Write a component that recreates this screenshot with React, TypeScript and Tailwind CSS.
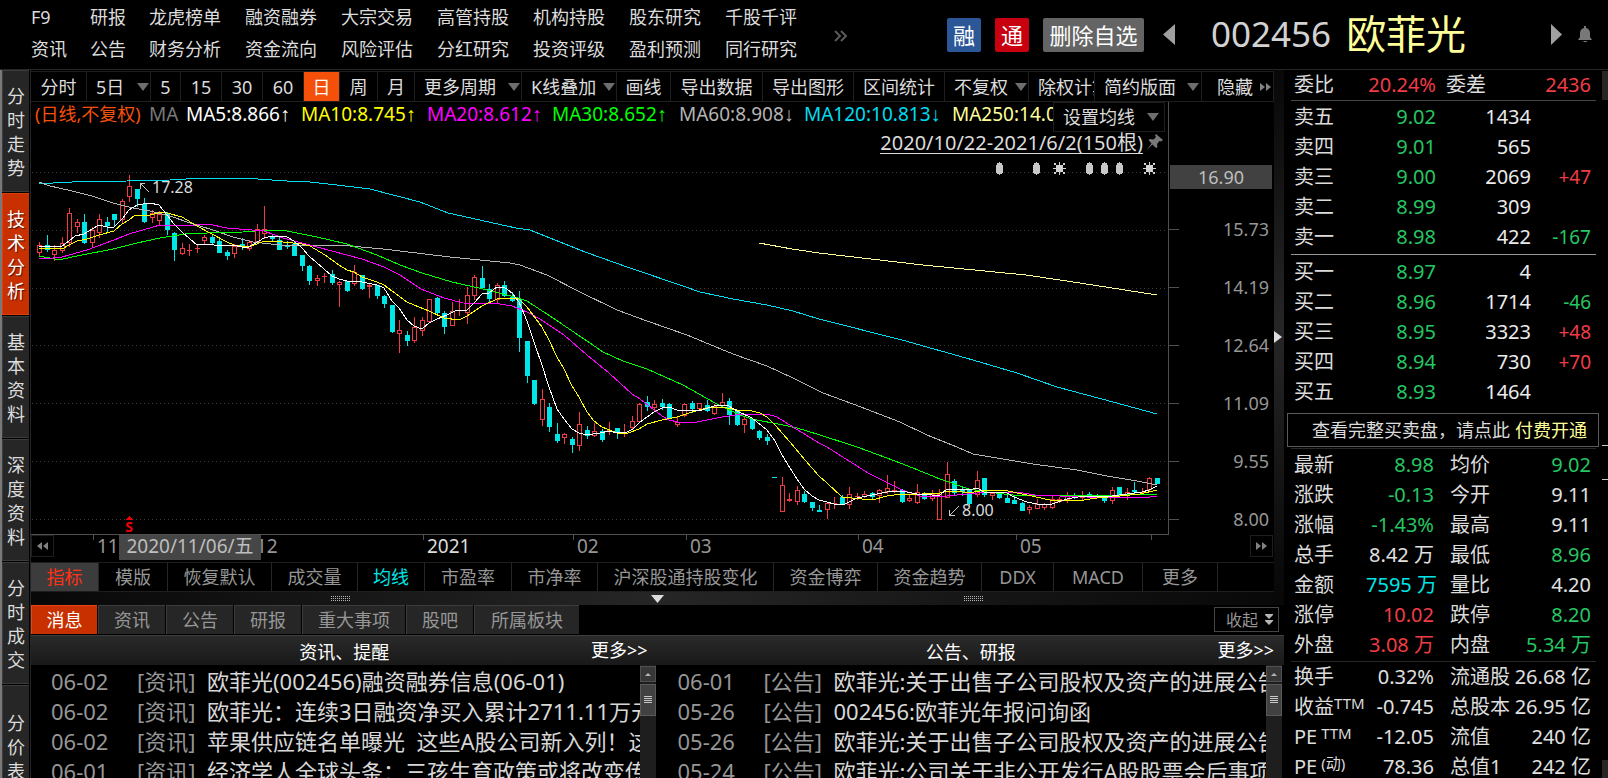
import React from "react";

const topLinks: [string, string][] = [
  ["F9", "资讯"],
  ["研报", "公告"],
  ["龙虎榜单", "财务分析"],
  ["融资融券", "资金流向"],
  ["大宗交易", "风险评估"],
  ["高管持股", "分红研究"],
  ["机构持股", "投资评级"],
  ["股东研究", "盈利预测"],
  ["千股千评", "同行研究"],
];

const sideTabs = ["分时走势", "技术分析", "基本资料", "深度资料", "分时成交", "分价表"];

const toolbar: { label: string; width: string; arrow?: boolean; active?: boolean }[] = [
  { label: "分时", width: "w-[56px]" },
  { label: "5日", width: "w-[64px]", arrow: true },
  { label: "5", width: "w-[30px]" },
  { label: "15", width: "w-[41px]" },
  { label: "30", width: "w-[41px]" },
  { label: "60", width: "w-[41px]" },
  { label: "日", width: "w-[36px]", active: true },
  { label: "周", width: "w-[38px]" },
  { label: "月", width: "w-[37px]" },
  { label: "更多周期", width: "w-[107px]", arrow: true },
  { label: "K线叠加", width: "w-[95px]", arrow: true },
  { label: "画线", width: "w-[54px]" },
  { label: "导出数据", width: "w-[92px]" },
  { label: "导出图形", width: "w-[91px]" },
  { label: "区间统计", width: "w-[91px]" },
  { label: "不复权", width: "w-[84px]", arrow: true },
];

const averages = [
  { label: "MA5:8.866", arrow: "↑", color: "text-white", width: "w-[115px]" },
  { label: "MA10:8.745", arrow: "↑", color: "text-[#ffff00]", width: "w-[126px]" },
  { label: "MA20:8.612", arrow: "↑", color: "text-[#ff00ff]", width: "w-[125px]" },
  { label: "MA30:8.652", arrow: "↑", color: "text-[#00ff00]", width: "w-[127px]" },
  { label: "MA60:8.908", arrow: "↓", color: "text-[#b4b4b4]", width: "w-[125px]" },
  { label: "MA120:10.813", arrow: "↓", color: "text-[#00dcf0]", width: "w-[148px]" },
  { label: "MA250:14.037", arrow: "↓", color: "text-[#ffff99]", width: "w-[148px]" },
];

/* direction, high, body top, body bottom, low */
type Candle = ["u" | "d", number, number, number, number];
const candles: Candle[] = [
  ["u", 242, 245, 253, 257], ["d", 235, 245, 250, 252], ["u", 245, 250, 255, 261], ["u", 237, 243, 251, 253],
  ["u", 208, 213, 243, 247], ["u", 219, 222, 227, 233], ["d", 214, 222, 243, 244], ["u", 227, 230, 243, 247],
  ["u", 214, 219, 233, 238], ["d", 217, 222, 226, 232], ["d", 214, 214, 220, 227], ["u", 199, 201, 220, 224],
  ["u", 175, 186, 197, 202], ["d", 189, 189, 199, 207], ["d", 198, 204, 222, 223], ["u", 210, 213, 218, 223],
  ["u", 211, 214, 221, 225], ["d", 212, 213, 230, 235], ["d", 232, 233, 250, 261], ["u", 243, 248, 254, 255],
  ["u", 244, 250, 251, 256], ["u", 245, 248, 249, 253], ["u", 235, 237, 241, 245], ["d", 235, 237, 243, 244],
  ["d", 238, 241, 253, 253], ["d", 250, 252, 256, 260], ["u", 244, 246, 254, 258], ["d", 238, 244, 246, 250],
  ["u", 240, 242, 249, 251], ["u", 224, 229, 242, 244], ["u", 206, 229, 234, 239], ["d", 234, 237, 239, 241],
  ["d", 237, 240, 250, 250], ["d", 241, 245, 247, 249], ["d", 242, 244, 256, 256], ["d", 255, 255, 266, 271],
  ["d", 265, 266, 281, 285], ["u", 275, 278, 281, 286], ["u", 273, 276, 277, 283], ["d", 270, 274, 283, 285],
  ["u", 281, 282, 285, 307], ["d", 281, 281, 291, 292], ["u", 265, 272, 284, 286], ["d", 275, 275, 289, 290],
  ["u", 284, 285, 287, 298], ["d", 285, 285, 296, 299], ["d", 295, 296, 304, 308], ["d", 305, 305, 332, 333],
  ["u", 320, 330, 334, 353], ["d", 331, 335, 341, 346], ["u", 317, 327, 341, 343], ["u", 317, 320, 331, 336],
  ["u", 299, 299, 322, 323], ["d", 297, 298, 313, 316], ["d", 311, 313, 327, 334], ["u", 302, 311, 326, 326],
  ["u", 299, 310, 311, 316], ["u", 287, 295, 313, 324], ["u", 275, 277, 296, 300], ["d", 266, 278, 288, 289],
  ["d", 284, 289, 299, 302], ["u", 283, 285, 300, 303], ["d", 281, 285, 296, 297], ["d", 292, 297, 301, 302],
  ["d", 291, 299, 338, 352], ["d", 341, 341, 376, 383], ["d", 380, 380, 404, 405], ["u", 389, 399, 420, 426],
  ["d", 403, 407, 427, 432], ["d", 423, 434, 441, 443], ["u", 433, 434, 438, 444], ["d", 437, 439, 445, 453],
  ["u", 412, 424, 446, 451], ["d", 426, 430, 436, 439], ["u", 423, 431, 436, 437], ["d", 429, 431, 440, 442],
  ["u", 422, 430, 431, 435], ["d", 428, 428, 433, 439], ["u", 424, 432, 433, 437], ["u", 416, 421, 428, 429],
  ["u", 403, 404, 422, 423], ["d", 396, 402, 407, 411], ["u", 400, 404, 408, 411], ["d", 399, 403, 407, 410],
  ["d", 403, 404, 418, 419], ["u", 416, 422, 425, 427], ["u", 403, 404, 416, 417], ["d", 401, 403, 409, 413],
  ["u", 403, 403, 409, 410], ["d", 400, 405, 411, 412], ["u", 404, 406, 414, 415], ["u", 393, 402, 406, 407],
  ["d", 398, 401, 415, 425], ["d", 411, 411, 425, 426], ["u", 417, 419, 425, 433], ["d", 418, 419, 429, 430],
  ["d", 430, 431, 438, 440], ["d", 434, 437, 441, 445], ["d", 477, 477, 478, 478], ["u", 477, 485, 512, 512],
  ["u", 493, 499, 501, 502], ["u", 486, 490, 502, 505], ["d", 491, 494, 502, 503], ["d", 502, 502, 508, 511],
  ["d", 505, 510, 512, 512], ["u", 503, 503, 510, 519], ["u", 497, 503, 504, 509], ["d", 495, 497, 504, 505],
  ["u", 487, 494, 505, 509], ["u", 493, 496, 497, 500], ["u", 491, 494, 497, 498], ["d", 492, 493, 497, 499],
  ["u", 489, 490, 496, 503], ["u", 475, 488, 492, 494], ["u", 481, 490, 491, 493], ["d", 489, 490, 502, 503],
  ["u", 494, 498, 501, 502], ["u", 484, 492, 503, 504], ["d", 492, 493, 499, 500], ["u", 490, 494, 499, 501],
  ["u", 489, 494, 520, 520], ["u", 462, 474, 498, 498], ["d", 479, 481, 493, 495], ["d", 487, 489, 492, 496],
  ["d", 489, 490, 504, 505], ["u", 471, 480, 495, 497], ["d", 478, 478, 495, 497], ["u", 492, 493, 496, 500],
  ["d", 493, 494, 498, 499], ["d", 495, 498, 503, 503], ["d", 496, 500, 504, 504], ["d", 502, 503, 511, 511],
  ["u", 505, 507, 510, 514], ["u", 499, 504, 509, 509], ["u", 503, 504, 508, 510], ["u", 496, 499, 508, 509],
  ["u", 497, 499, 502, 503], ["u", 492, 496, 500, 503], ["d", 493, 495, 497, 499], ["u", 491, 495, 498, 500],
  ["d", 492, 494, 496, 497], ["d", 494, 495, 497, 498], ["d", 495, 496, 501, 503], ["u", 487, 490, 501, 504],
  ["d", 487, 487, 496, 496], ["u", 488, 492, 496, 500], ["d", 482, 490, 492, 494], ["u", 488, 492, 493, 495],
  ["u", 477, 478, 490, 492], ["d", 478, 478, 484, 484],
];

const lines = [
  { color: "#00dcf0", points: "39,183 53,183 72,182 127,181 170,180 203,178 243,178 287,181 310,182 337,185 370,189 393,195 420,202 448,213 516,228 530,230 555,240 585,252 630,268 683,286 700,292 733,299 767,305 793,311 819,319 902,340 973,360 1017,373 1057,387 1113,402 1157,414" },
  { color: "#ffff99", points: "759,243 792,249 819,253 871,259 923,265 1026,275 1080,283 1157,295" },
  { color: "#b4b4b4", points: "39,182 50,186 72,191 92,196 113,203 133,208 150,211 170,216 190,223 213,230 233,237 253,242 280,245 350,246 383,249 400,251 450,257 510,263 520,265 547,275 580,292 617,310 647,321 687,335 733,354 767,366 793,378 823,393 853,404 900,422 927,435 957,447 973,454 997,458 1033,464 1077,470 1107,476 1137,481 1157,485" },
  { color: "#00ff00", points: "39,256 55,259 63,259 77,256 113,249 137,243 160,238 185,234 207,233 243,232 268,230 287,231 317,237 347,244 377,255 400,265 422,273 452,282 483,289 515,297 527,301 550,316 587,341 603,352 623,361 647,369 683,385 715,403 740,415 752,419 783,425 797,428 820,435 857,447 887,458 913,468 940,479 969,489 987,492 1013,495 1037,495 1127,495 1157,494" },
  { color: "#ff00ff", points: "39,258 53,258 62,257 87,250 114,240 129,234 160,225 197,225 208,224 227,228 264,231 283,238 302,243 332,251 362,259 384,267 400,275 421,289 444,298 463,303 500,304 512,306 527,312 540,319 564,335 587,355 609,373 632,394 640,399 662,416 669,420 678,422 697,422 722,417 743,414 767,414 777,417 793,427 819,443 827,447 868,473 902,490 920,496 947,496 967,494 987,492 1017,492 1035,495 1060,496 1087,497 1150,497 1157,496" },
  { color: "#ffff00", points: "39,248 62,249 69,245 77,241 87,239 99,235 114,231 122,224 129,220 135,215 150,215 162,212 167,213 182,217 197,226 210,233 227,242 234,245 247,247 257,244 264,241 283,242 302,244 310,246 325,255 339,265 347,270 354,272 362,277 377,282 384,285 392,291 407,302 414,305 429,311 444,318 459,320 467,316 482,306 497,299 515,298 519,299 527,307 542,327 549,340 557,357 564,369 572,386 579,397 587,412 594,421 602,427 617,433 628,433 639,429 647,424 662,420 677,417 692,412 707,408 722,407 737,410 752,411 760,413 767,417 775,425 790,442 805,460 819,476 827,483 842,497 872,500 887,496 902,494 922,494 940,493 947,491 957,491 969,493 985,490 1003,490 1027,495 1050,500 1077,501 1097,498 1120,496 1140,494 1157,490" },
  { color: "#ffffff", points: "39,247 62,246 69,241 75,236 84,234 92,229 99,225 107,227 114,227 122,219 129,210 137,205 150,203 159,205 167,215 174,224 182,232 190,239 197,245 208,244 220,246 233,245 242,247 249,247 264,238 272,236 287,237 294,241 302,248 309,256 324,269 332,276 339,279 347,281 362,282 377,285 384,288 392,301 399,308 407,320 414,326 422,329 429,323 437,319 447,315 455,311 467,310 474,303 482,294 489,293 497,287 504,287 512,293 519,302 527,321 534,342 542,365 549,387 557,409 564,419 572,429 579,433 587,435 600,433 609,431 617,433 627,432 633,429 639,423 647,417 654,412 662,408 669,407 677,410 702,410 714,406 722,405 729,406 737,411 752,418 767,430 775,441 782,455 790,468 797,479 804,489 812,496 819,500 827,502 834,504 845,504 857,498 872,495 887,492 902,491 917,494 932,495 940,495 947,489 960,489 969,490 977,488 984,492 1007,493 1014,497 1027,502 1037,504 1052,504 1067,499 1083,496 1104,497 1127,494 1142,492 1149,490 1157,486" },
];

const priceMarks = ["15.73", "14.19", "12.64", "11.09", "9.55", "8.00"];
const gridRows = [172, 230, 288, 345, 403, 461, 519];

const timeMarks = ["11", "12", "2021", "02", "03", "04", "05", ""];

const indicatorTabs: { label: string; width: string; tone?: string }[] = [
  { label: "指标", width: "w-[68px]", tone: "bg-[#3c3c3c] text-[#ff3214]" },
  { label: "模版", width: "w-[69px]" },
  { label: "恢复默认", width: "w-[104px]" },
  { label: "成交量", width: "w-[86px]" },
  { label: "均线", width: "w-[67px]", tone: "text-[#00e6e6]" },
  { label: "市盈率", width: "w-[87px]" },
  { label: "市净率", width: "w-[86px]" },
  { label: "沪深股通持股变化", width: "w-[176px]" },
  { label: "资金博弈", width: "w-[104px]" },
  { label: "资金趋势", width: "w-[104px]" },
  { label: "DDX", width: "w-[72px]" },
  { label: "MACD", width: "w-[89px]" },
  { label: "更多", width: "w-[75px]" },
];

const newsTabs = [
  { label: "消息", width: "w-[66px]" },
  { label: "资讯", width: "w-[67px]" },
  { label: "公告", width: "w-[67px]" },
  { label: "研报", width: "w-[67px]" },
  { label: "重大事项", width: "w-[103px]" },
  { label: "股吧", width: "w-[67px]" },
  { label: "所属板块", width: "w-[105px]" },
];

const leftNews = [
  ["06-02", "[资讯]", "欧菲光(002456)融资融券信息(06-01)"],
  ["06-02", "[资讯]", "欧菲光：连续3日融资净买入累计2711.11万元"],
  ["06-02", "[资讯]", "苹果供应链名单曝光  这些A股公司新入列！这些"],
  ["06-01", "[资讯]", "经济学人全球头条：三孩生育政策或将改变传统"],
];
const rightNews = [
  ["06-01", "[公告]", "欧菲光:关于出售子公司股权及资产的进展公告"],
  ["05-26", "[公告]", "002456:欧菲光年报问询函"],
  ["05-26", "[公告]", "欧菲光:关于出售子公司股权及资产的进展公告"],
  ["05-24", "[公告]", "欧菲光:公司关于非公开发行A股股票会后事项"],
];

const sells = [
  ["卖五", "9.02", "1434", ""],
  ["卖四", "9.01", "565", ""],
  ["卖三", "9.00", "2069", "+47"],
  ["卖二", "8.99", "309", ""],
  ["卖一", "8.98", "422", "-167"],
];
const buys = [
  ["买一", "8.97", "4", ""],
  ["买二", "8.96", "1714", "-46"],
  ["买三", "8.95", "3323", "+48"],
  ["买四", "8.94", "730", "+70"],
  ["买五", "8.93", "1464", ""],
];

const G = "text-[#26c663]";
const R = "text-[#f03c46]";
const W = "text-[#e0e0e0]";

type Stat = { a: string; sup?: string; av: string; ac: string; b: string; bv: string; bc: string };
const stats: Stat[] = [
  { a: "最新", av: "8.98", ac: G, b: "均价", bv: "9.02", bc: G },
  { a: "涨跌", av: "-0.13", ac: G, b: "今开", bv: "9.11", bc: W },
  { a: "涨幅", av: "-1.43%", ac: G, b: "最高", bv: "9.11", bc: W },
  { a: "总手", av: "8.42 万", ac: W, b: "最低", bv: "8.96", bc: G },
  { a: "金额", av: "7595 万", ac: "text-[#00e6e6]", b: "量比", bv: "4.20", bc: W },
  { a: "涨停", av: "10.02", ac: R, b: "跌停", bv: "8.20", bc: G },
  { a: "外盘", av: "3.08 万", ac: R, b: "内盘", bv: "5.34 万", bc: G },
];
const ratios: Stat[] = [
  { a: "换手", av: "0.32%", ac: W, b: "流通股", bv: "26.68 亿", bc: W },
  { a: "收益", sup: "TTM", av: "-0.745", ac: W, b: "总股本", bv: "26.95 亿", bc: W },
  { a: "PE", sup: " TTM", av: "-12.05", ac: W, b: "流值", bv: "240 亿", bc: W },
  { a: "PE", sup: " (动)", av: "78.36", ac: W, b: "总值1", bv: "242 亿", bc: W },
];

function Down() {
  return (
    <svg className="h-[8px] w-[12px] shrink-0" viewBox="0 0 12 8" aria-hidden="true">
      <path d="M0 0H12L6 8Z" fill="#6e6e6e" />
    </svg>
  );
}

function Skip({ back = false }: { back?: boolean }) {
  return (
    <svg className="h-[8px] w-[11px] shrink-0" viewBox="0 0 11 8" aria-hidden="true">
      <path d={back ? "M5 0V8L0 4ZM11 0V8L6 4Z" : "M0 0V8L5 4ZM6 0V8L11 4Z"} fill="#828282" />
    </svg>
  );
}

function Header() {
  return (
    <header className="flex h-[70px] shrink-0 items-start border-b border-[#262626] pr-[16px] pl-[31px]">
      <nav className="grid grid-cols-[59px_59px_96px_96px_96px_96px_96px_96px_96px] pt-px text-[18px] leading-[32px] text-[#dcdcdc]">
        {topLinks.map(([top, bottom]) => (
          <div key={top} className="flex flex-col whitespace-nowrap">
            <a href="#">{top}</a>
            <a href="#">{bottom}</a>
          </div>
        ))}
      </nav>
      <button aria-label="展开" className="mt-[30px] ml-[13px]">
        <svg className="h-[12px] w-[14px]" viewBox="0 0 14 12" fill="none" stroke="#5a5a5a" strokeWidth="2" aria-hidden="true">
          <path d="M1 1L6 6L1 11M7 1L12 6L7 11" />
        </svg>
      </button>
      <div className="mt-[18px] ml-auto flex shrink-0 gap-[14px] text-[22px] leading-[34px] text-white">
        <button className="h-[34px] w-[34px] rounded-xs bg-[#2b5797]">融</button>
        <button className="h-[34px] w-[34px] rounded-xs bg-[#c80010]">通</button>
        <button className="h-[34px] w-[101px] rounded-xs bg-[#646464]">删除自选</button>
      </div>
      <button aria-label="上一只" className="mt-[24px] ml-[19px]">
        <svg className="h-[21px] w-[12px]" viewBox="0 0 12 21" aria-hidden="true">
          <path d="M12 0V21L0 10.500Z" fill="#a0a0a0" />
        </svg>
      </button>
      <h1 className="mt-[6px] ml-[36px] flex w-[340px] shrink-0 gap-[15px] whitespace-nowrap">
        <span className="text-[35px] leading-[56px] text-[#d2d2d2]">002456</span>
        <span className="text-[40px] leading-[56px] text-[#ffff99]">欧菲光</span>
      </h1>
      <button aria-label="下一只" className="mt-[24px]">
        <svg className="h-[21px] w-[11px]" viewBox="0 0 11 21" aria-hidden="true">
          <path d="M0 0V21L11 10.500Z" fill="#a0a0a0" />
        </svg>
      </button>
      <button aria-label="提醒" className="mt-[26px] ml-[16px]">
        <svg className="h-[17px] w-[14px]" viewBox="0 0 14 17" fill="#787878" aria-hidden="true">
          <path d="M6 0H8V2C11 2.500 12 5 12 7V11L14 14H0L2 11V7C2 5 3 2.500 6 2ZM4.500 15H9.500C9 16.600 5 16.600 4.500 15Z" />
        </svg>
      </button>
    </header>
  );
}

function SideBar() {
  return (
    <nav className="flex w-[30px] shrink-0 flex-col gap-px overflow-hidden border-l-2 border-[#787878] pr-px">
      {sideTabs.map((t, i) => (
        <button
          key={t}
          className={
            "flex h-[122px] shrink-0 flex-col items-center justify-center border border-r-0 pt-[2px] text-[18px] leading-[24px] " +
            (i === 1
              ? "border-[#e04010] bg-[#c83000] text-white [text-shadow:1px_1px_1px_#501000]"
              : "border-[#3c3c3c] bg-[#262626] text-[#dcdcdc]")
          }
        >
          {[...t].map((c, k) => (
            <span key={k}>{c}</span>
          ))}
        </button>
      ))}
    </nav>
  );
}

function Toolbar() {
  return (
    <div className="mt-px flex h-[31px] shrink-0 border-y border-[#1e1e1e] text-[18px] leading-[28px] whitespace-nowrap text-[#dcdcdc]">
      {toolbar.map((b) => (
        <button
          key={b.label}
          className={
            "flex shrink-0 items-center border-r border-[#1e1e1e] " +
            b.width +
            (b.arrow ? " justify-between pr-px pl-[9px]" : " justify-center") +
            (b.active ? " bg-[#f5500a] text-white" : "")
          }
        >
          {b.label}
          {b.arrow && <Down />}
        </button>
      ))}
      <button className="flex min-w-0 flex-1 items-center overflow-hidden border-r border-[#1e1e1e] pl-[9px]">除权计算</button>
      <button className="flex w-[107px] shrink-0 items-center justify-between border-r border-[#1e1e1e] pr-[2px] pl-[9px]">
        简约版面
        <Down />
      </button>
      <button className="flex w-[72px] shrink-0 items-center justify-between border-r border-[#1e1e1e] pr-[2px] pl-[15px]">
        隐藏
        <Skip />
      </button>
    </div>
  );
}

function Bars({ x }: { x: number }) {
  return <path d={`M${x} 162h1v1h2v2h1v8h-1v1h-2v1h-1v-1h-2v-1h-1v-8h1v-2h2z`} fill="#c8c8c8" />;
}

function Sun({ x }: { x: number }) {
  return (
    <g fill="#d2d2d2">
      <rect x={x - 3} y="165" width="7" height="7" />
      <path d={`M${x} 162h1v13h-1zM${x - 6} 168h13v1h-13zM${x - 5} 163h2v2h-2zM${x + 4} 163h2v2h-2zM${x - 5} 172h2v2h-2zM${x + 4} 172h2v2h-2z`} />
    </g>
  );
}

function Plot() {
  return (
    <svg
      className="block h-[376px] w-full"
      viewBox="31 158 1137 376"
      preserveAspectRatio="none"
      shapeRendering="crispEdges"
      role="img"
      aria-label="日K线图"
    >
      {gridRows.map((y) => (
        <line key={y} x1="32" x2="1168" y1={y + 0.5} y2={y + 0.5} stroke="#3c3c3c" strokeDasharray="1 3" />
      ))}
      {candles.map(([dir, high, top, bottom, low], i) => {
        const x = 39 + Math.floor(i * 7.5 + 0.5);
        const color = dir === "u" ? "#f03c46" : "#00e6e6";
        if (dir === "d") {
          return (
            <g key={i} fill={color}>
              <rect x={x} y={high} width="1" height={low - high} />
              <rect x={x - 2} y={top} width="5" height={bottom - top} />
            </g>
          );
        }
        return (
          <g key={i}>
            <rect x={x} y={high} width="1" height={Math.max(0, top - high)} fill={color} />
            <rect x={x} y={bottom} width="1" height={Math.max(0, low - bottom)} fill={color} />
            {bottom - top < 2 ? (
              <rect x={x - 2} y={top} width="5" height="1" fill={color} />
            ) : (
              <rect x={x - 1.5} y={top + 0.5} width="4" height={bottom - top - 1} fill="none" stroke={color} />
            )}
          </g>
        );
      })}
      {lines.map((l) => (
        <polyline key={l.color} points={l.points} fill="none" stroke={l.color} />
      ))}
      <Bars x={999} />
      <Bars x={1036} />
      <Sun x={1059} />
      <Bars x={1089} />
      <Bars x={1104} />
      <Bars x={1119} />
      <Sun x={1149} />
      <g stroke="#c8c8c8" fill="none">
        <path d="M140.500 189V183.500H145M140 183L149 192" />
        <path d="M949.500 510V515.500H955M950 515L959 506" />
      </g>
      <g fill="#dcdcdc" fontSize="16">
        <text x="152" y="193">17.28</text>
        <text x="962" y="516">8.00</text>
      </g>
      <g fill="#f00000">
        <path d="M129 516L133 520H125Z" />
        <text x="129" y="532" fontSize="14" fontWeight="bold" textAnchor="middle">S</text>
      </g>
    </svg>
  );
}

function Chart() {
  return (
    <div className="flex h-[433px] shrink-0">
      <div className="flex min-w-0 flex-1 flex-col border-r border-b border-[#505050]">
        <div className="flex h-[30px] shrink-0">
          <div className="flex min-w-0 flex-1 overflow-hidden pl-[4px] text-[19px] leading-[25px] whitespace-nowrap">
            <span className="w-[114px] shrink-0 text-[18px] text-[#f5500a]">(日线,不复权)</span>
            <span className="w-[37px] shrink-0 text-[#787878]">MA</span>
            {averages.map((m) => (
              <span key={m.label} className={"shrink-0 " + m.width + " " + m.color}>
                {m.label}
                <span className="font-['Liberation_Sans',sans-serif] text-[20px]">{m.arrow}</span>
              </span>
            ))}
          </div>
          <button className="mr-[3px] flex w-[112px] shrink-0 items-center justify-between border border-[#1e1e1e] pr-[5px] pl-[9px] text-[18px] leading-[26px] text-[#dcdcdc]">
            设置均线
            <Down />
          </button>
        </div>
        <div className="flex h-[26px] shrink-0 items-start justify-end gap-[4px] pr-[5px]">
          <a href="#" className="border-b border-[#dcdcdc] text-[20px] leading-[21px] text-[#dcdcdc]">
            2020/10/22-2021/6/2(150根)
          </a>
          <svg className="mt-[2px] h-[16px] w-[16px]" viewBox="0 0 16 16" fill="#787878" aria-hidden="true">
            <path d="M9 0L16 6L14 7.500L12.500 7L10 10L10.500 13L9 14L5.500 10.500L0 15.500L4.500 9.500L1.500 6L3 5L6.500 5.500L9 3L8 1.500Z" />
          </svg>
        </div>
        <Plot />
      </div>
      <div className="w-[105px] shrink-0 pt-[63px] text-[18px] text-[#969696]">
        <div className="mr-[2px] mb-[11px] ml-px h-[24px] bg-[#414141] text-center leading-[24px] text-[#bebebe]">16.90</div>
        {priceMarks.map((p) => (
          <div key={p} className="flex h-[58px] items-center justify-between pr-[5px]">
            <span className="h-px w-[10px] bg-[#505050]" />
            <span className="leading-[24px]">{p}</span>
          </div>
        ))}
      </div>
    </div>
  );
}

function TimeAxis() {
  return (
    <div className="relative flex h-[27px] shrink-0 justify-between text-[19px] leading-[22px] text-[#969696]">
      <button aria-label="后退" className="flex h-[22px] w-[23px] shrink-0 items-center justify-center border border-[#1e1e1e]">
        <Skip back />
      </button>
      <div className="ml-[39px] grid flex-1 grid-cols-[159fr_171fr_150fr_113fr_172fr_158fr_135fr_18fr]">
        {timeMarks.map((m) => (
          <div key={m} className="flex items-start gap-[3px]">
            <span className="h-[5px] w-px bg-[#505050]" />
            <span className={m === "2021" ? "text-[#dcdcdc]" : ""}>{m}</span>
          </div>
        ))}
      </div>
      <button aria-label="前进" className="mr-px ml-[81px] flex h-[22px] w-[23px] shrink-0 items-center justify-center border border-[#1e1e1e]">
        <Skip />
      </button>
      <span className="absolute top-0 left-[88px] h-[25px] w-[142px] bg-[#464646] text-center text-[#bebebe]">2020/11/06/五</span>
    </div>
  );
}

function IndicatorTabs() {
  return (
    <div className="flex h-[30px] shrink-0 border-y border-[#1e1e1e] text-[18px] leading-[28px] text-[#969696]">
      {indicatorTabs.map((t) => (
        <button key={t.label} className={"shrink-0 border-r border-[#262626] whitespace-nowrap " + t.width + " " + (t.tone ?? "")}>
          {t.label}
        </button>
      ))}
    </div>
  );
}

function Grip() {
  return (
    <svg className="h-[5px] w-[20px]" viewBox="0 0 20 5" shapeRendering="crispEdges" aria-hidden="true">
      <path d="M0 .5H20M0 2.500H20M0 4.500H20" stroke="#b4b4b4" strokeDasharray="1 1" />
    </svg>
  );
}

function Splitter() {
  return (
    <div className="flex h-[13px] shrink-0 items-center justify-evenly bg-linear-to-r from-[#080808] via-[#262626] to-[#080808]">
      <Grip />
      <svg className="h-[8px] w-[13px]" viewBox="0 0 13 8" aria-hidden="true">
        <path d="M0 0H13L6.500 8Z" fill="#dcdcdc" />
      </svg>
      <Grip />
    </div>
  );
}

function NewsPane({ title, rows }: { title: string; rows: string[][] }) {
  return (
    <section className="flex min-w-0 flex-1 flex-col">
      <div className="grid h-[30px] shrink-0 grid-cols-[1fr_auto_1fr] border-t border-[#3c3c3c] bg-linear-to-b from-[#2a2a2a] to-[#191919] px-[10px] text-[18px] leading-[32px] text-white">
        <h2 className="col-start-2">{title}</h2>
        <a href="#" className="text-right leading-[29px]">更多&gt;&gt;</a>
      </div>
      <div className="flex min-h-0 flex-1">
        <ul className="min-w-0 flex-1 overflow-hidden pt-px pl-[20px] text-[22px] leading-[30px]">
          {rows.map(([date, tag, text], i) => (
            <li key={i} className="flex whitespace-pre">
              <span className="w-[86px] shrink-0 text-[#969696]">{date}</span>
              <span className="w-[70px] shrink-0 text-[#969696]">{tag}</span>
              <a href="#" className="text-[#d7d7d7]">{text}</a>
            </li>
          ))}
        </ul>
        <div className="mr-[2px] flex w-[16px] shrink-0 flex-col gap-[2px] bg-[#1e1e1e] pt-px" aria-hidden="true">
          <span className="flex h-[16px] items-center justify-center border border-[#505050] bg-[#373737]">
            <svg className="h-[4px] w-[6px]" viewBox="0 0 6 4">
              <path d="M0 4H6L3 1Z" fill="#b4b4b4" />
            </svg>
          </span>
          <span className="flex h-[32px] items-center justify-center border border-[#5a5a5a] bg-[#414141]">
            <svg className="h-[8px] w-[8px]" viewBox="0 0 8 8" shapeRendering="crispEdges">
              <path d="M0 0H8V1H0ZM0 2H8V3H0ZM0 4H8V5H0ZM0 6H8V7H0Z" fill="#c8c8c8" />
            </svg>
          </span>
        </div>
      </div>
    </section>
  );
}

function News() {
  return (
    <div className="flex min-h-0 flex-1 flex-col">
      <div className="flex h-[30px] shrink-0 items-start gap-px pb-px text-[18px] leading-[28px]">
        {newsTabs.map((t, i) => (
          <button
            key={t.label}
            className={
              "h-[29px] border-t border-l " +
              t.width +
              (i === 0 ? " border-[#e64614] bg-[#c83000] text-white" : " border-[#3c3c3c] bg-[#262626] text-[#969696]")
            }
          >
            {t.label}
          </button>
        ))}
        <button className="mt-[2px] mr-[5px] ml-auto flex h-[25px] w-[65px] items-center justify-between border border-[#464646] pr-[5px] pl-[11px] text-[16px] leading-[24px] text-[#969696]">
          收起
          <svg className="h-[11px] w-[8px]" viewBox="0 0 8 11" fill="#b4b4b4" aria-hidden="true">
            <path d="M0 0H8V1L4 5L0 1ZM0 6H8V7L4 11L0 7Z" />
          </svg>
        </button>
      </div>
      <div className="flex min-h-0 flex-1">
        <NewsPane title="资讯、提醒" rows={leftNews} />
        <NewsPane title="公告、研报" rows={rightNews} />
      </div>
    </div>
  );
}

function Depth({ rows, label }: { rows: string[][]; label: string }) {
  return (
    <table aria-label={label} className="w-full table-fixed text-right text-[20px] leading-[30px]">
      <colgroup>
        <col className="w-[42px]" />
        <col className="w-[100px]" />
        <col className="w-[95px]" />
        <col className="w-[60px]" />
      </colgroup>
      <tbody>
        {rows.map(([name, price, vol, delta]) => (
          <tr key={name} className="h-[30px]">
            <th scope="row" className="p-0 text-left font-normal text-[#dcdcdc]">{name}</th>
            <td className={"p-0 " + G}>{price}</td>
            <td className="p-0 text-[#ebebeb]">{vol}</td>
            <td className={"p-0 text-[19px] " + (delta.startsWith("+") ? R : G)}>{delta}</td>
          </tr>
        ))}
      </tbody>
    </table>
  );
}

function Stats({ rows, label }: { rows: Stat[]; label: string }) {
  return (
    <table aria-label={label} className="w-full table-fixed text-right text-[20px] leading-[30px] whitespace-nowrap">
      <colgroup>
        <col className="w-[72px]" />
        <col className="w-[68px]" />
        <col className="w-[78px]" />
        <col className="w-[79px]" />
      </colgroup>
      <tbody>
        {rows.map((r) => (
          <tr key={r.b} className="h-[30px]">
            <th scope="row" className="p-0 text-left font-normal text-[#dcdcdc]">
              <span className="flex whitespace-pre">
                {r.a}
                {r.sup && <span className="text-[15px] leading-[22px]">{r.sup}</span>}
              </span>
            </th>
            <td className={"p-0 " + r.ac}>{r.av}</td>
            <th scope="row" className="p-0 pl-[16px] text-left font-normal text-[#dcdcdc]">{r.b}</th>
            <td className={"p-0 " + r.bc}>{r.bv}</td>
          </tr>
        ))}
      </tbody>
    </table>
  );
}

function Quote() {
  return (
    <aside className="flex w-[324px] shrink-0 overflow-hidden">
      <div className="min-w-0 flex-1 pl-[3px]">
        <div className="mr-[6px] ml-[4px] flex h-[31px] border-b border-[#464646] pr-[5px] pl-[3px] text-[20px] leading-[30px] text-[#dcdcdc]">
          <span>委比</span>
          <span className={"w-[102px] text-right " + R}>20.24%</span>
          <span className="ml-[10px]">委差</span>
          <span className={"ml-auto " + R}>2436</span>
        </div>
        <div className="mr-[6px] ml-[4px] border-b border-[#969696] pt-px pr-[5px] pb-[2px] pl-[3px]">
          <Depth rows={sells} label="卖盘" />
        </div>
        <div className="mr-[11px] ml-[7px] pt-[2px] pb-[6px]">
          <Depth rows={buys} label="买盘" />
        </div>
        <button className="mr-[3px] flex h-[34px] w-[312px] items-center gap-[5px] border border-[#5a5a5a] pl-[24px] text-[18px] whitespace-nowrap text-[#dcdcdc]">
          查看完整买卖盘，请点此
          <span className="text-[#ffff99]">付费开通</span>
        </button>
        <div className="mt-px mr-[6px] ml-[4px] border-y border-[#282828] pt-px pr-[5px] pb-px pl-[3px]">
          <Stats rows={stats} label="行情" />
        </div>
        <div className="mr-[11px] ml-[7px]">
          <Stats rows={ratios} label="指标" />
        </div>
      </div>
      <div className="flex w-[6px] shrink-0 flex-col pt-px" aria-hidden="true">
        <span className="h-[29px] bg-[#262626]" />
        <span className="mt-[345px] h-px bg-[#c8c8c8]" />
        <span className="mt-[33px] h-px bg-[#c8c8c8]" />
        <span className="mt-auto h-[18px] shrink-0 bg-[#262626]" />
      </div>
    </aside>
  );
}

export default function App() {
  return (
    <div className="flex h-screen flex-col overflow-hidden bg-black font-['Noto_Sans','Noto_Sans_CJK_SC',sans-serif]">
      <Header />
      <div className="flex min-h-0 flex-1">
        <SideBar />
        <main className="flex min-w-0 flex-1 flex-col border-l border-[#262626]">
          <div className="flex shrink-0">
            <div className="flex min-w-0 flex-1 flex-col">
              <Toolbar />
              <Chart />
              <TimeAxis />
              <IndicatorTabs />
            </div>
            <div className="flex w-[10px] shrink-0 items-center bg-linear-to-b from-[#080808] via-[#262626] to-[#080808]">
              <svg className="mt-[12px] h-[12px] w-[8px]" viewBox="0 0 8 12" aria-hidden="true">
                <path d="M0 0V12L8 6Z" fill="#dcdcdc" />
              </svg>
            </div>
          </div>
          <Splitter />
          <News />
        </main>
        <Quote />
      </div>
    </div>
  );
}
